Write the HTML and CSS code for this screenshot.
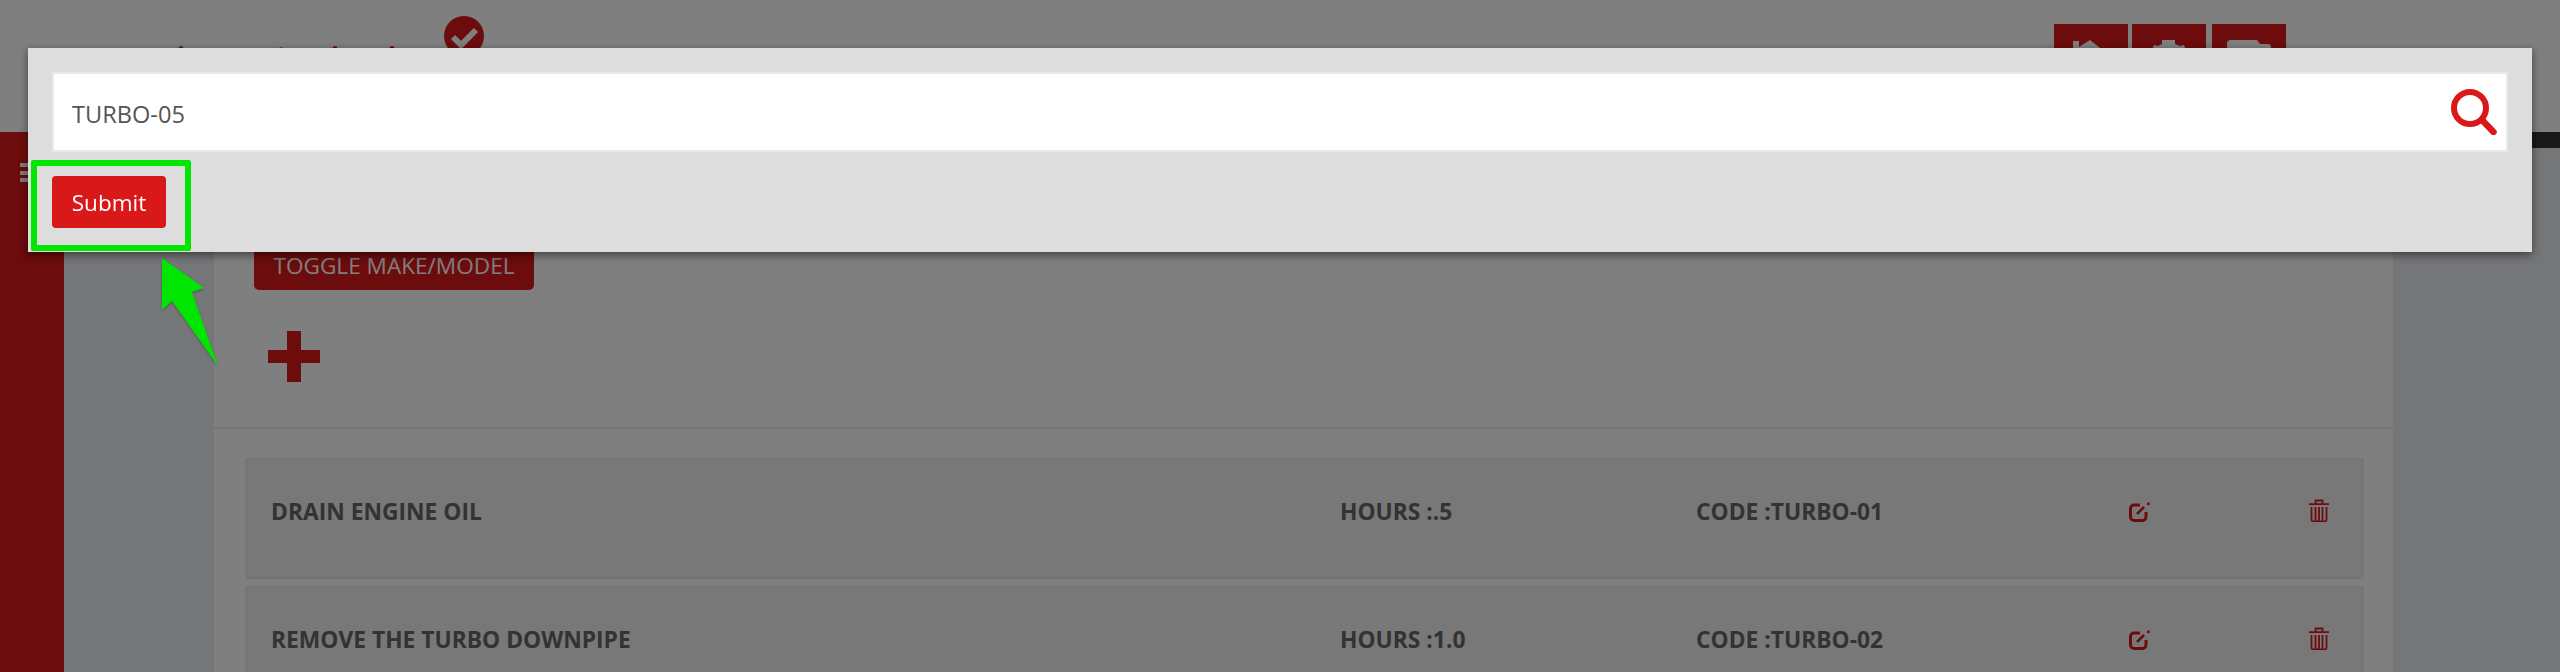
FILE: index.html
```html
<!DOCTYPE html>
<html lang="en">
<head>
    <meta charset="UTF-8">
    <meta name="viewport" content="width=device-width, initial-scale=1.0">
    <title>Service Tasks</title>
    <link rel="stylesheet" href="styles.css">
</head>
<body>

    <div class="page">
        <header class="top-header">
            <svg class="logo" width="232" height="32" viewBox="0 0 232 32">
                <circle cx="11" cy="32.500" r="2.500" fill="#666"/>
                <circle cx="111" cy="33" r="2" fill="#999"/>
                <circle cx="165" cy="32.500" r="2.500" fill="#d9181a"/>
                <circle cx="222" cy="32.500" r="2.500" fill="#d9181a"/>
            </svg>
            <svg class="status-check" width="40" height="40" viewBox="0 0 40 40">
                <circle cx="20" cy="20" r="20" fill="#d9181a"/>
                <path d="M9 21l8 8 15-15" fill="none" stroke="#fff" stroke-width="6"/>
            </svg>
            <nav class="header-actions">
                <a class="header-btn">
                    <svg width="36" height="30" viewBox="0 0 36 30"><path d="M0 1h6v6L17 0l19 15H30v15H5V15H0z" fill="#fff"/></svg>
                </a>
                <a class="header-btn">
                    <svg width="36" height="30" viewBox="0 0 36 30"><path d="M11 0h13v4l5 2 4-1 3 8v6H0v-6l3-8 4 1 4-2z" fill="#fff"/></svg>
                </a>
                <a class="header-btn header-btn-last">
                    <svg width="44" height="30" viewBox="0 0 44 30"><path d="M4 0h26l3 4h8a3 3 0 0 1 3 3v20H0V4a4 4 0 0 1 4-4z" fill="#fff"/></svg>
                </a>
            </nav>
        </header>

        <div class="app-body">
            <aside class="sidebar">
                <div class="menu-toggle">
                    <span></span>
                    <span></span>
                    <span></span>
                </div>
            </aside>
            <main class="main">
                <div class="black-bar"></div>
                <section class="panel">
                    <div class="panel-top">
                        <button type="button" class="toggle-btn">TOGGLE MAKE/MODEL</button>
                        <svg class="add-icon" width="52" height="51" viewBox="0 0 52 51">
                            <path d="M19 0h14v19h19v13H33v19H19V32H0V19h19z" fill="#d9181a"/>
                        </svg>
                    </div>
                    <div class="task-list">
                        <div class="task-row">
                            <span>DRAIN ENGINE OIL</span>
                            <span>HOURS :.5</span>
                            <span>CODE :TURBO-01</span>
                            <svg class="edit-icon" width="21" height="20" viewBox="0 0 21 20">
                                <path d="M11 3H5a3.5 3.5 0 0 0-3.5 3.5v8.500a3.500 3.500 0 0 0 3.500 3.500h8.500a3.500 3.500 0 0 0 3.500-3.500V10" fill="none" stroke="#d9181a" stroke-width="3"/>
                                <path d="M8 12L15 5" stroke="#d9181a" stroke-width="2.500"/>
                                <circle cx="19.300" cy="1.700" r="1.500" fill="#d9181a"/>
                            </svg>
                            <svg class="trash-icon" width="20" height="23" viewBox="0 0 20 23">
                                <path d="M0 5.200h20M6.500 5V1.500h7V5M2.500 8v13a1.300 1.300 0 0 0 1.300 1.300h12.400a1.300 1.300 0 0 0 1.300-1.300V8M6.500 8v14M10 8v14M13.500 8v14" fill="none" stroke="#d9181a" stroke-width="1.800"/>
                            </svg>
                        </div>
                        <div class="task-row">
                            <span>REMOVE THE TURBO DOWNPIPE</span>
                            <span>HOURS :1.0</span>
                            <span>CODE :TURBO-02</span>
                            <svg class="edit-icon" width="21" height="20" viewBox="0 0 21 20">
                                <path d="M11 3H5a3.5 3.5 0 0 0-3.5 3.5v8.500a3.500 3.500 0 0 0 3.500 3.500h8.500a3.500 3.500 0 0 0 3.500-3.500V10" fill="none" stroke="#d9181a" stroke-width="3"/>
                                <path d="M8 12L15 5" stroke="#d9181a" stroke-width="2.500"/>
                                <circle cx="19.300" cy="1.700" r="1.500" fill="#d9181a"/>
                            </svg>
                            <svg class="trash-icon" width="20" height="23" viewBox="0 0 20 23">
                                <path d="M0 5.200h20M6.500 5V1.500h7V5M2.500 8v13a1.300 1.300 0 0 0 1.300 1.300h12.400a1.300 1.300 0 0 0 1.300-1.300V8M6.500 8v14M10 8v14M13.500 8v14" fill="none" stroke="#d9181a" stroke-width="1.800"/>
                            </svg>
                        </div>
                    </div>
                </section>
            </main>
        </div>
    </div>

    <div class="backdrop"></div>

    <form class="search-modal">
        <div class="search-field">
            <input type="text" class="search-input" value="TURBO-05">
            <svg class="search-icon" width="46" height="46" viewBox="0 0 46 46">
                <circle cx="19" cy="19" r="16" fill="none" stroke="#d9181a" stroke-width="6"/>
                <path d="M31 31l11.500 12" stroke="#d9181a" stroke-width="6.500" stroke-linecap="round"/>
            </svg>
        </div>
        <button type="button" class="submit-btn">Submit</button>
    </form>

    <div class="callout-box"></div>
    <svg class="callout-arrow" width="60" height="112" viewBox="0 0 60 112">
        <path d="M2 2L44 32 32 36 58 110 12 45 2 54z" fill="#00e600"/>
    </svg>

</body>
</html>
```

FILE: styles.css
```css
* {
    box-sizing: border-box;
}
body {
    margin: 0;
    height: 672px;
    overflow: hidden;
    font-family: "Open Sans", sans-serif;
    background-color: #ebedf0;
}
.page {
    height: 672px;
    overflow: hidden;
    display: flex;
    flex-direction: column;
}
.top-header {
    height: 132px;
    flex: none;
    display: flex;
    align-items: flex-start;
    background-color: #fff;
    padding: 16px 274px 0 170px;
}
.logo {
    flex: none;
}
.status-check {
    flex: none;
    margin-left: 42px;
}
.header-actions {
    margin-left: auto;
    margin-top: 8px;
    display: flex;
    gap: 4px;
}
.header-btn {
    width: 74px;
    height: 60px;
    background-color: #d9181a;
    display: flex;
    justify-content: center;
    padding-top: 16px;
}
.header-btn-last {
    margin-left: 2px;
}
.app-body {
    flex: 1;
    display: flex;
    min-height: 0;
}
.sidebar {
    width: 64px;
    flex: none;
    background-color: #d9181a;
    padding: 31px 0 0 20px;
}
.menu-toggle {
    display: flex;
    flex-direction: column;
    gap: 3.500px;
    width: 20px;
}
.menu-toggle span {
    display: block;
    height: 4px;
    background-color: #fff;
    border-radius: 1px;
}
.main {
    flex: 1;
    min-width: 0;
}
.black-bar {
    height: 16px;
    background-color: #333;
}
.panel {
    margin: 12px 166px 0 150px;
    background-color: #fff;
    border-right: 1px solid #f2f2f2;
}
.panel-top {
    padding: 78px 40px 45px;
    border-bottom: 2px solid #ebebeb;
}
.toggle-btn {
    display: block;
    width: 280px;
    height: 52px;
    padding: 2px 0 0;
    border: none;
    border-radius: 5px;
    background-color: #d9181a;
    color: #fff;
    font-family: "Open Sans", sans-serif;
    font-size: 22.600px;
}
.add-icon {
    display: block;
    margin: 41px 0 0 14px;
}
.task-list {
    padding: 29px 30px 0 32px;
    display: flex;
    flex-direction: column;
    gap: 8px;
}
.task-row {
    height: 120px;
    flex: none;
    display: grid;
    grid-template-columns: 1069px 356px 433px 180px auto;
    align-items: start;
    padding: 36px 0 0 24px;
    background-color: #f0f0f0;
    border: 1px solid #e4e4e4;
    box-shadow: 0 1px 2px rgba(0, 0, 0, 0.1);
    color: #666;
    font-size: 22.800px;
    font-weight: 700;
    line-height: 33px;
}
.edit-icon {
    margin-top: 7px;
}
.trash-icon {
    margin-top: 4px;
}
.backdrop {
    position: fixed;
    inset: 0;
    background-color: rgba(0, 0, 0, 0.5);
}
.search-modal {
    position: fixed;
    top: 48px;
    left: 28px;
    right: 28px;
    height: 204px;
    padding: 24px;
    background-color: #ddd;
    box-shadow: 0 3px 9px rgba(0, 0, 0, 0.5);
}
.search-field {
    height: 80px;
    display: flex;
    align-items: center;
    padding: 0 9px 0 18px;
    background-color: #fff;
    border: 2px solid #e8e8e8;
}
.search-input {
    flex: 1;
    min-width: 0;
    padding: 3px 0 0;
    border: none;
    outline: none;
    font-family: "Open Sans", sans-serif;
    font-size: 23.600px;
    color: #555;
}
.search-icon {
    flex: none;
    margin-top: -1px;
}
.submit-btn {
    display: block;
    width: 114px;
    height: 52px;
    margin-top: 24px;
    padding: 0;
    border: none;
    border-radius: 4px;
    background-color: #d9181a;
    color: #fff;
    font-family: "Open Sans", sans-serif;
    font-size: 22.500px;
}
.callout-box {
    position: fixed;
    top: 160px;
    left: 31px;
    width: 160px;
    height: 91px;
    border: 6px solid #00e600;
    border-radius: 2px;
}
.callout-arrow {
    position: fixed;
    top: 256px;
    left: 160px;
    filter: drop-shadow(0 1px 1px rgba(0, 0, 0, 0.3));
}
```
